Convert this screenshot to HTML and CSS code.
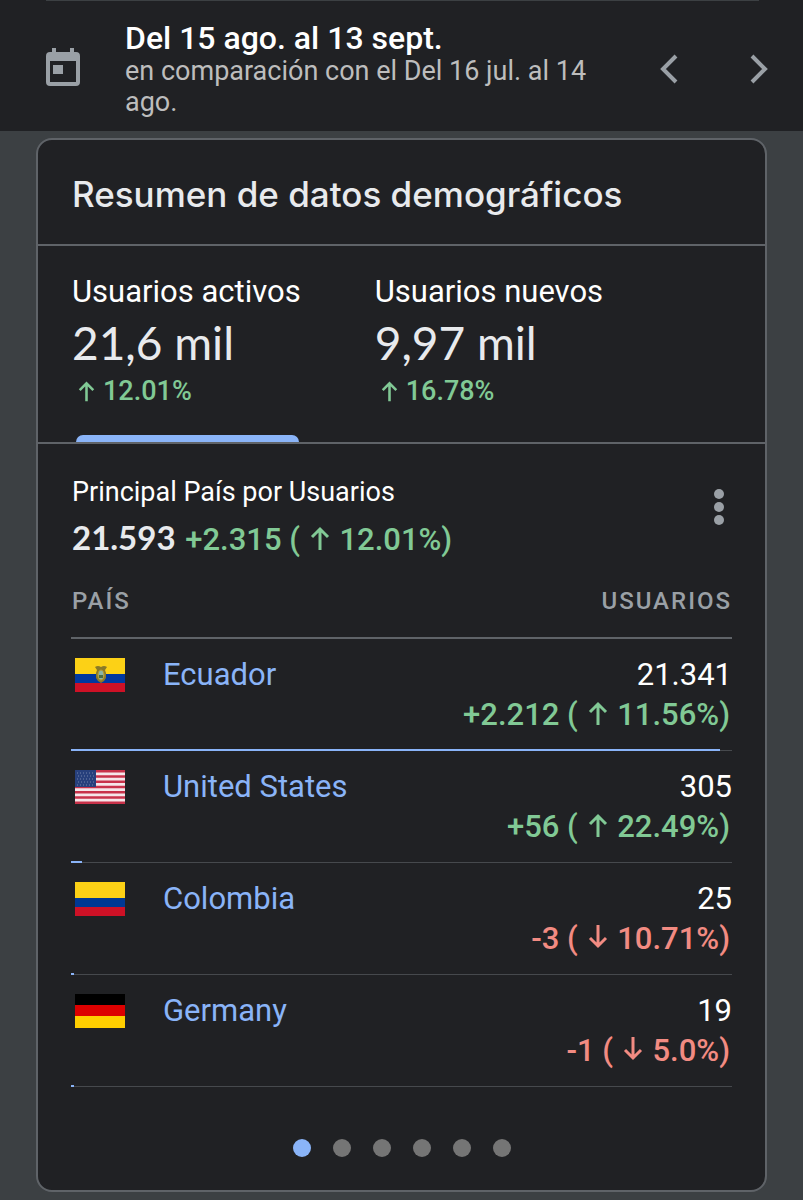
FILE: index.html
```html
<!DOCTYPE html>
<html lang="es">
<head>
<meta charset="utf-8">
<meta name="viewport" content="width=device-width, initial-scale=1">
<title>Resumen de datos demográficos</title>
<link rel="stylesheet" href="styles.css">
</head>
<body>
<svg class="defs" width="0" height="0" aria-hidden="true">
  <symbol id="up" viewBox="0 0 20 24"><path d="M10 24V3M2 11l8-8 8 8" fill="none" stroke="currentColor" stroke-width="3"/></symbol>
  <symbol id="down" viewBox="0 0 20 24"><path d="M10 0v21M2 13l8 8 8-8" fill="none" stroke="currentColor" stroke-width="3"/></symbol>
</svg>

<header class="datebar">
  <svg class="calendar" viewBox="0 0 34 38" aria-hidden="true">
    <path fill="currentColor" fill-rule="evenodd" d="M6 0h4v4h14V0h4v4h2a4 4 0 0 1 4 4v26a4 4 0 0 1-4 4H4a4 4 0 0 1-4-4V8a4 4 0 0 1 4-4h2zM4 13v21h26V13zM7 17h10v9H7z"/>
  </svg>
  <div class="dates">
    <h1 class="range">Del 15 ago. al 13 sept.</h1>
    <p class="compare">en comparación con el Del 16 jul. al 14 ago.</p>
  </div>
  <nav class="pager">
    <button type="button" class="icon-btn" aria-label="Anterior"><svg viewBox="0 0 18 30" width="18" height="30"><path d="M16 2L3 15l13 13" fill="none" stroke="currentColor" stroke-width="4"/></svg></button>
    <button type="button" class="icon-btn" aria-label="Siguiente"><svg viewBox="0 0 18 30" width="18" height="30"><path d="M2 2l13 13L2 28" fill="none" stroke="currentColor" stroke-width="4"/></svg></button>
  </nav>
</header>

<main class="page">
  <section class="card">
    <h2 class="card-title">Resumen de datos demográficos</h2>
    <div class="tabs" role="tablist">
      <button type="button" class="tab active" role="tab" aria-selected="true">
        <span class="tab-label">Usuarios activos</span>
        <span class="tab-value">21,6 mil</span>
        <span class="tab-change"><svg class="arrow small"><use href="#up"/></svg>12.01%</span>
      </button>
      <button type="button" class="tab" role="tab" aria-selected="false">
        <span class="tab-label">Usuarios nuevos</span>
        <span class="tab-value">9,97 mil</span>
        <span class="tab-change"><svg class="arrow small"><use href="#up"/></svg>16.78%</span>
      </button>
    </div>

    <div class="panel">
      <div class="summary">
        <div>
          <h3 class="summary-title">Principal País por Usuarios</h3>
          <p class="total"><span class="total-value">21.593</span> <span class="up">+2.315 ( <svg class="arrow"><use href="#up"/></svg> 12.01%)</span></p>
        </div>
        <button type="button" class="more" aria-label="Más opciones"><svg viewBox="0 0 10 36" width="10" height="36" fill="currentColor"><circle cx="5" cy="5" r="5"/><circle cx="5" cy="18" r="5"/><circle cx="5" cy="31" r="5"/></svg></button>
      </div>

      <table class="countries">
        <thead>
          <tr><th scope="col">PAÍS</th><th scope="col" class="num">USUARIOS</th></tr>
        </thead>
        <tbody>
          <tr>
            <td><div class="country">
              <svg class="flag" viewBox="0 0 50 34" aria-hidden="true"><path fill="#fcd116" d="M0 0h50v17H0z"/><path fill="#0038a0" d="M0 16h50v10H0z"/><path fill="#ce1126" d="M0 25h50v9H0z"/><path fill="#8a7a28" d="M20 9q3-2 6 0q3-2 6 0l-2 3 1 3v5l-2 3-3 2-3-2-2-3v-5l1-3z"/><ellipse cx="26" cy="17" rx="3" ry="5" fill="#8bb4a4" stroke="#b99b2b"/><path fill="#476c47" d="M24 17h4v3h-4z"/></svg>
              <a href="#ecuador">Ecuador</a></div><span class="bar" style="width:98.2%"></span></td>
            <td class="num">21.341<div class="change up">+2.212 ( <svg class="arrow"><use href="#up"/></svg> 11.56%)</div></td>
          </tr>
          <tr>
            <td><div class="country">
              <svg class="flag" viewBox="0 0 50 34" aria-hidden="true"><path fill="#f5e6e9" d="M0 0h50v34H0z"/><path d="M0 1.3h50M0 6.5h50M0 11.8h50M0 17h50M0 22.2h50M0 27.5h50M0 32.7h50" stroke="#c8324a" stroke-width="2.6"/><path fill="#27407c" d="M0 0h21v17H0z"/><path d="M2 3h18M3 6h18M2 9h18M3 12h18M2 15h18" stroke="#7483aa" stroke-dasharray="1 2"/></svg>
              <a href="#united-states">United States</a></div><span class="bar" style="width:1.7%"></span></td>
            <td class="num">305<div class="change up">+56 ( <svg class="arrow"><use href="#up"/></svg> 22.49%)</div></td>
          </tr>
          <tr>
            <td><div class="country">
              <svg class="flag" viewBox="0 0 50 34" aria-hidden="true"><path fill="#fcd116" d="M0 0h50v17H0z"/><path fill="#003893" d="M0 16h50v10H0z"/><path fill="#ce1126" d="M0 25h50v9H0z"/></svg>
              <a href="#colombia">Colombia</a></div><span class="bar" style="width:0.4%"></span></td>
            <td class="num">25<div class="change down">-3 ( <svg class="arrow"><use href="#down"/></svg> 10.71%)</div></td>
          </tr>
          <tr>
            <td><div class="country">
              <svg class="flag" viewBox="0 0 50 34" aria-hidden="true"><path d="M0 0h50v12H0z"/><path fill="#d00" d="M0 11h50v12H0z"/><path fill="#ffce00" d="M0 22h50v12H0z"/></svg>
              <a href="#germany">Germany</a></div><span class="bar" style="width:0.4%"></span></td>
            <td class="num">19<div class="change down">-1 ( <svg class="arrow"><use href="#down"/></svg> 5.0%)</div></td>
          </tr>
        </tbody>
      </table>
    </div>

    <nav class="dots">
      <button type="button" class="dot current" aria-label="Tarjeta 1"></button>
      <button type="button" class="dot" aria-label="Tarjeta 2"></button>
      <button type="button" class="dot" aria-label="Tarjeta 3"></button>
      <button type="button" class="dot" aria-label="Tarjeta 4"></button>
      <button type="button" class="dot" aria-label="Tarjeta 5"></button>
      <button type="button" class="dot" aria-label="Tarjeta 6"></button>
    </nav>
  </section>
</main>
</body>
</html>
```

FILE: styles.css
```css
* { box-sizing: border-box; }

body {
  margin: 0;
  background: #3c4043;
  color: #fff;
  font-family: Roboto, sans-serif;
  font-size: 31px;
  line-height: 40px;
}

h1, h2, h3, p { margin: 0; }

button {
  padding: 0;
  border: 0;
  background: none;
  color: inherit;
  font: inherit;
  text-align: left;
}

.defs { position: absolute; }

.datebar {
  display: flex;
  align-items: center;
  padding: 20px 35px 13px 46px;
  background: #202124;
  position: relative;
}

.datebar::before {
  content: "";
  position: absolute;
  top: 0;
  left: 46px;
  right: 44px;
  height: 1px;
  background: #3c4043;
}

.calendar {
  flex: none;
  width: 34px;
  height: 38px;
  margin: 0 45px 4px 0;
  color: #9aa0a6;
}

.dates { flex: 1; }

.range {
  font-size: 32px;
  font-weight: 500;
  line-height: 36px;
}

.compare {
  max-width: 480px;
  color: #bdbdbd;
  font-size: 27px;
  line-height: 31px;
}

.pager {
  display: flex;
  gap: 72px;
  color: #9aa0a6;
}

.icon-btn {
  display: flex;
}

.page { padding: 7px 36px 8px; }

.card {
  border: 2px solid #5f6368;
  border-radius: 16px;
  background: #202124;
}

.card-title {
  padding: 34px 34px 30px;
  border-bottom: 2px solid #5f6368;
  color: #e8eaed;
  font-family: "Google Sans", Inter, sans-serif;
  font-size: 35px;
  font-weight: 500;
  line-height: 40px;
}

.tabs {
  display: flex;
  gap: 74px;
  padding: 26px 34px 0;
  border-bottom: 2px solid #5f6368;
}

.tab {
  display: flex;
  flex-direction: column;
  height: 170px;
  position: relative;
}

.tab.active::after {
  content: "";
  position: absolute;
  left: 4px;
  right: 2px;
  bottom: 0;
  height: 7px;
  border-radius: 7px 7px 0 0;
  background: #8ab4f8;
}

.tab-label {
  font-size: 31px;
  line-height: 40px;
}

.tab-value {
  color: #e8eaed;
  font-family: "Google Sans", Lato, sans-serif;
  font-size: 46px;
  line-height: 62px;
}

.tab-change {
  display: flex;
  align-items: center;
  gap: 8px;
  padding-left: 6px;
  color: #81c995;
  font-size: 27px;
  font-weight: 500;
  line-height: 34px;
}

.panel { padding: 28px 33px 0; }

.summary {
  display: flex;
  justify-content: space-between;
  align-items: center;
  padding: 0 8px 0 1px;
}

.summary-title {
  font-size: 27px;
  font-weight: 400;
  line-height: 40px;
}

.total {
  font-size: 31px;
  font-weight: 500;
  line-height: 50px;
}

.total-value {
  margin-right: 2px;
  color: #e8eaed;
  font-family: "Google Sans", Lato, sans-serif;
  font-size: 33px;
  font-weight: 700;
}

.more {
  display: flex;
  padding-bottom: 24px;
  color: #9aa0a6;
}

.up, .down { font-weight: 500; }
.up { color: #81c995; }
.down { color: #f28b82; }
.change { padding-right: 2px; }

.arrow {
  width: 20px;
  height: 24px;
  margin: 0 2px;
}

.arrow.small {
  width: 17px;
  height: 22px;
  margin: 0;
}

.countries {
  width: 100%;
  border-collapse: separate;
  border-spacing: 0;
}

.countries th {
  padding: 16px 1px;
  border-bottom: 2px solid #5f6368;
  color: #9aa0a6;
  font-size: 24px;
  font-weight: 500;
  letter-spacing: 2px;
  text-align: left;
}

.countries th.num { padding-right: 0; }

.countries tbody tr { position: relative; }

.countries td {
  padding: 16px 0 15px;
  border-bottom: 1px solid #46494d;
  vertical-align: top;
}

.countries .num { text-align: right; }

.country {
  display: flex;
  align-items: center;
  gap: 38px;
  padding-left: 4px;
}

.country a {
  color: #8ab4f8;
  text-decoration: none;
}

.flag {
  width: 50px;
  height: 34px;
}

.bar {
  position: absolute;
  left: 0;
  bottom: 0;
  height: 2px;
  background: #8ab4f8;
}

.dots {
  display: flex;
  justify-content: center;
  gap: 22px;
  padding: 52px 0 33px;
}

.dot {
  width: 18px;
  height: 18px;
  border-radius: 50%;
  background: #757575;
}

.dot.current { background: #8ab4f8; }
```
